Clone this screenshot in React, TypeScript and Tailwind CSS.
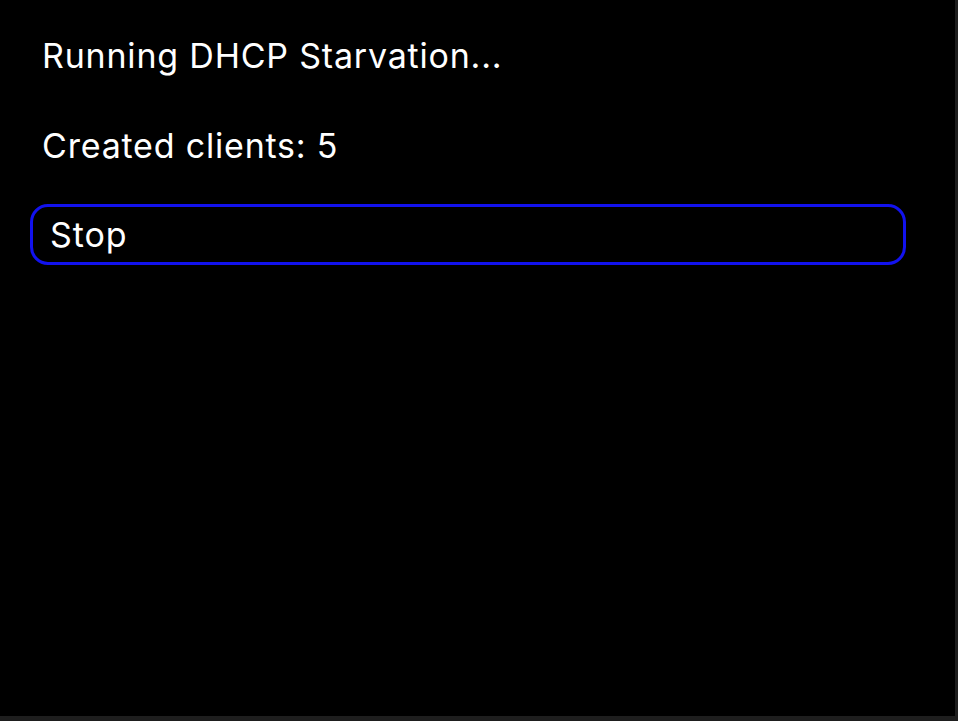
const App = () => {
  return (
    <div className="w-[958px] h-[721px] bg-[#1e1e1e] font-['Inter',sans-serif]">
      <div className="w-[955px] h-[716px] bg-black flex flex-col px-[30px] pt-[36px] text-white">
        <p className="pl-[12px] text-[34px] leading-[40px] tracking-[0.8px]">Running DHCP Starvation...</p>
        <p className="pl-[12px] mt-[50px] text-[34px] leading-[40px] tracking-[0.8px]">Created clients: 5</p>
        <button className="mt-[38px] w-[876px] h-[61px] border-[3px] border-[#1212ee] rounded-[18px] pl-[17px] text-left text-[34px] leading-[40px] tracking-[0.9px] text-white">
          Stop
        </button>
      </div>
    </div>
  );
};

export default App;
